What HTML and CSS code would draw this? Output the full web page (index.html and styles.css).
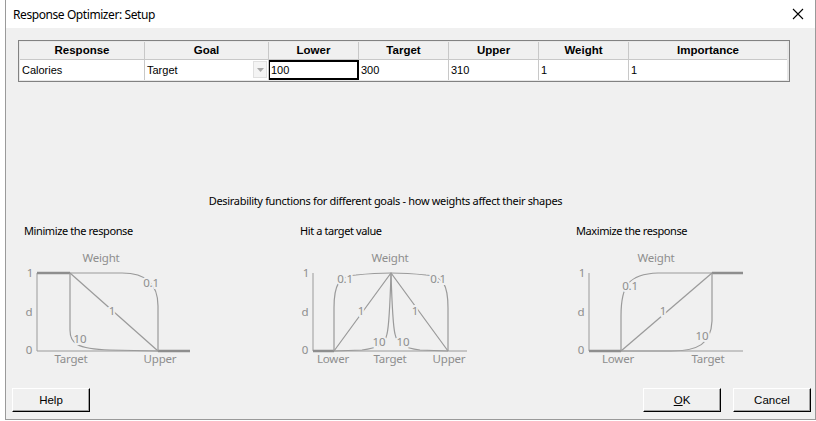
FILE: index.html
```html
<!DOCTYPE html>
<html>
<head>
<meta charset="utf-8">
<title>Response Optimizer: Setup</title>
<link rel="stylesheet" href="styles.css">
</head>
<body>
<div class="window">
  <div class="titlebar">
    <span class="title">Response Optimizer: Setup</span>
    <svg class="close" width="12" height="12" viewBox="0 0 12 12"><path d="M1 1 L11 11 M11 1 L1 11" stroke="#000" stroke-width="1.1" fill="none"/></svg>
  </div>
  <div class="content">
    <div class="grid">
      <div class="cell head">Response</div>
      <div class="cell head">Goal</div>
      <div class="cell head">Lower</div>
      <div class="cell head">Target</div>
      <div class="cell head">Upper</div>
      <div class="cell head">Weight</div>
      <div class="cell head last">Importance</div>
      <div class="cell data">Calories</div>
      <div class="cell data goal">Target<span class="dd"><svg width="7" height="4" viewBox="0 0 7 4"><path d="M0 0 H7 L3.5 4 Z" fill="#a8a8a8"/></svg></span></div>
      <div class="cell data focus">100</div>
      <div class="cell data">300</div>
      <div class="cell data">310</div>
      <div class="cell data">1</div>
      <div class="cell data last">1</div>
    </div>

    <div class="heading">Desirability functions for different goals - how weights affect their shapes</div>

    <div class="panels">
      <div class="panel">
        <div class="panel-label">Minimize the response</div>
        <svg class="chart" width="180" height="122" viewBox="0 0 180 122">
          <path class="ax" d="M13 27 V105 H166"/>
          <path class="thick" d="M13 27 H46"/>
          <path class="thick" d="M134 105 H166"/>
          <path class="ln" d="M46 27 L134 105"/>
          <path class="ln" d="M46 27 H98 C119 27 134 36 134 60 V105"/>
          <path class="ln" d="M46 27 V84 C46 97 52 103 86 104 L134 105"/>
          <text x="77" y="16" class="mid">Weight</text>
          <text x="6" y="31" class="mid">1</text>
          <text x="5" y="70" class="mid">d</text>
          <text x="5" y="108" class="mid">0</text>
          <text x="127" y="41" class="mid gap">0.1</text>
          <text x="88" y="69" class="mid gap">1</text>
          <text x="56" y="97" class="mid gap">10</text>
          <text x="47" y="117" class="mid">Target</text>
          <text x="136" y="117" class="mid">Upper</text>
        </svg>
      </div>
      <div class="panel">
        <div class="panel-label">Hit a target value</div>
        <svg class="chart" width="180" height="122" viewBox="0 0 180 122">
          <path class="ax" d="M13 27 V105 H167"/>
          <path class="thick" d="M13 105 H34"/>
          <path class="ln" d="M34 105 L91 27 L148 105"/>
          <path class="ln" d="M34 105 V62 C34 40 38 30 56 29 Q75 27 91 27"/>
          <path class="ln" d="M148 105 V62 C148 40 144 30 126 29 Q107 27 91 27"/>
          <path class="ln" d="M91 27 C90 60 89 80 87 88 C85 98 78 102 62 104 L34 105"/>
          <path class="ln" d="M91 27 C92 60 93 80 95 88 C97 98 104 102 120 104 L148 105"/>
          <text x="90" y="16" class="mid">Weight</text>
          <text x="6" y="31" class="mid">1</text>
          <text x="5" y="70" class="mid">d</text>
          <text x="5" y="108" class="mid">0</text>
          <text x="45" y="37" class="mid gap">0.1</text>
          <text x="138" y="37" class="mid gap">0.1</text>
          <text x="61" y="69" class="mid gap">1</text>
          <text x="115" y="69" class="mid gap">1</text>
          <text x="79" y="100" class="mid gap">10</text>
          <text x="103" y="100" class="mid gap">10</text>
          <text x="33" y="117" class="mid">Lower</text>
          <text x="90" y="117" class="mid">Target</text>
          <text x="149" y="117" class="mid">Upper</text>
        </svg>
      </div>
      <div class="panel">
        <div class="panel-label">Maximize the response</div>
        <svg class="chart" width="180" height="122" viewBox="0 0 180 122">
          <path class="ax" d="M13 27 V105 H167"/>
          <path class="thick" d="M13 105 H45"/>
          <path class="thick" d="M136 27 H167"/>
          <path class="ln" d="M45 105 L136 27"/>
          <path class="ln" d="M45 105 V70 C45 40 52 28 82 27 H136"/>
          <path class="ln" d="M45 105 H95 C122 105 135 98 136 75 V27"/>
          <text x="80" y="16" class="mid">Weight</text>
          <text x="6" y="31" class="mid">1</text>
          <text x="5" y="70" class="mid">d</text>
          <text x="5" y="108" class="mid">0</text>
          <text x="54" y="44" class="mid gap">0.1</text>
          <text x="87" y="69" class="mid gap">1</text>
          <text x="126" y="94" class="mid gap">10</text>
          <text x="42" y="117" class="mid">Lower</text>
          <text x="132" y="117" class="mid">Target</text>
        </svg>
      </div>
    </div>

    <div class="buttons">
      <button class="btn">Help</button>
      <div class="spacer"></div>
      <button class="btn"><u>O</u>K</button>
      <button class="btn">Cancel</button>
    </div>
  </div>
</div>
</body>
</html>
```

FILE: styles.css
```css
html, body {
  margin: 0;
  padding: 0;
  background: #ffffff;
}
body {
  font-family: "Noto Sans", "Open Sans", sans-serif;
  font-size: 11px;
  color: #000;
}
.window {
  margin-left: 5px;
  width: 811px;
  height: 420px;
  box-sizing: border-box;
  border-left: 1px solid #9a9a9a;
  border-right: 1px solid #9a9a9a;
  border-bottom: 1px solid #9a9a9a;
  display: flex;
  flex-direction: column;
}
.titlebar {
  height: 28px;
  background: #ffffff;
  display: flex;
  align-items: center;
  padding-left: 7px;
  padding-right: 11px;
  flex: none;
}
.title {
  font-size: 12px;
  letter-spacing: -0.42px;
  flex: 1;
}
.close {
  display: block;
}
.content {
  flex: 1;
  background: #f0f0f0;
  padding: 12px 4px 0 6px;
  display: flex;
  flex-direction: column;
}
.grid {
  margin-left: 6px;
  width: 772px;
  box-sizing: border-box;
  border: 1px solid #828282;
  padding: 1px;
  background: #e8e8e8;
  display: grid;
  grid-template-columns: 125px 124px 90px 90px 90px 90px 158px;
  grid-template-rows: 18px 20px;
}
.cell {
  box-sizing: border-box;
  border-right: 1px solid #c8c8c8;
  font-family: "Liberation Sans", Arial, sans-serif;
  overflow: hidden;
  white-space: nowrap;
}
.cell.last {
  border-right: none;
}
.head {
  background: #f0f0f0;
  border-bottom: 1px solid #c8c8c8;
  font-weight: bold;
  font-size: 11.5px;
  text-align: center;
  line-height: 17px;
}
.data {
  background: #ffffff;
  font-size: 11px;
  line-height: 20px;
  padding-left: 2px;
}
.goal {
  position: relative;
}
.dd {
  position: absolute;
  right: 1px;
  top: 1px;
  width: 14px;
  height: 17px;
  box-sizing: border-box;
  background: #f4f4f4;
  border: 1px solid #e0e0e0;
  display: flex;
  align-items: center;
  justify-content: center;
}
.dd svg {
  display: block;
}
.focus {
  border: 2px solid #000;
  line-height: 16px;
  padding-left: 1px;
  margin-left: -1px;
}
.heading {
  margin-top: 111px;
  margin-left: 6px;
  text-align: center;
  width: 735px;
  font-size: 11px;
  letter-spacing: -0.32px;
  line-height: 16px;
}
.panels {
  margin-top: 14px;
  margin-left: 12px;
  display: grid;
  grid-template-columns: 276px 276px 1fr;
}
.panel-label {
  font-size: 11px;
  letter-spacing: -0.4px;
  line-height: 16px;
  height: 16px;
}
.chart {
  display: block;
  margin-top: 7px;
}
.chart text {
  font-family: "Noto Sans", "Open Sans", sans-serif;
  font-size: 11.5px;
  letter-spacing: -0.2px;
  fill: #8e8e8e;
}
.chart .mid {
  text-anchor: middle;
}
.chart .gap {
  stroke: #f0f0f0;
  stroke-width: 4px;
  paint-order: stroke;
}
.ax {
  fill: none;
  stroke: #9a9a9a;
  stroke-width: 1;
}
.thick {
  fill: none;
  stroke: #8e8e8e;
  stroke-width: 2.5;
}
.ln {
  fill: none;
  stroke: #9a9a9a;
  stroke-width: 1.2;
}
.buttons {
  margin-top: 20px;
  display: flex;
  gap: 12px;
}
.spacer {
  flex: 1;
}
.btn {
  width: 78px;
  height: 24px;
  box-sizing: border-box;
  background: #f0f0f0;
  border: 1px solid;
  border-color: #ffffff #000000 #000000 #ffffff;
  box-shadow: inset -1px -1px 0 #a0a0a0;
  font-family: "Liberation Sans", Arial, sans-serif;
  font-size: 11.5px;
  color: #000;
  padding: 0;
  margin: 0;
}
```
